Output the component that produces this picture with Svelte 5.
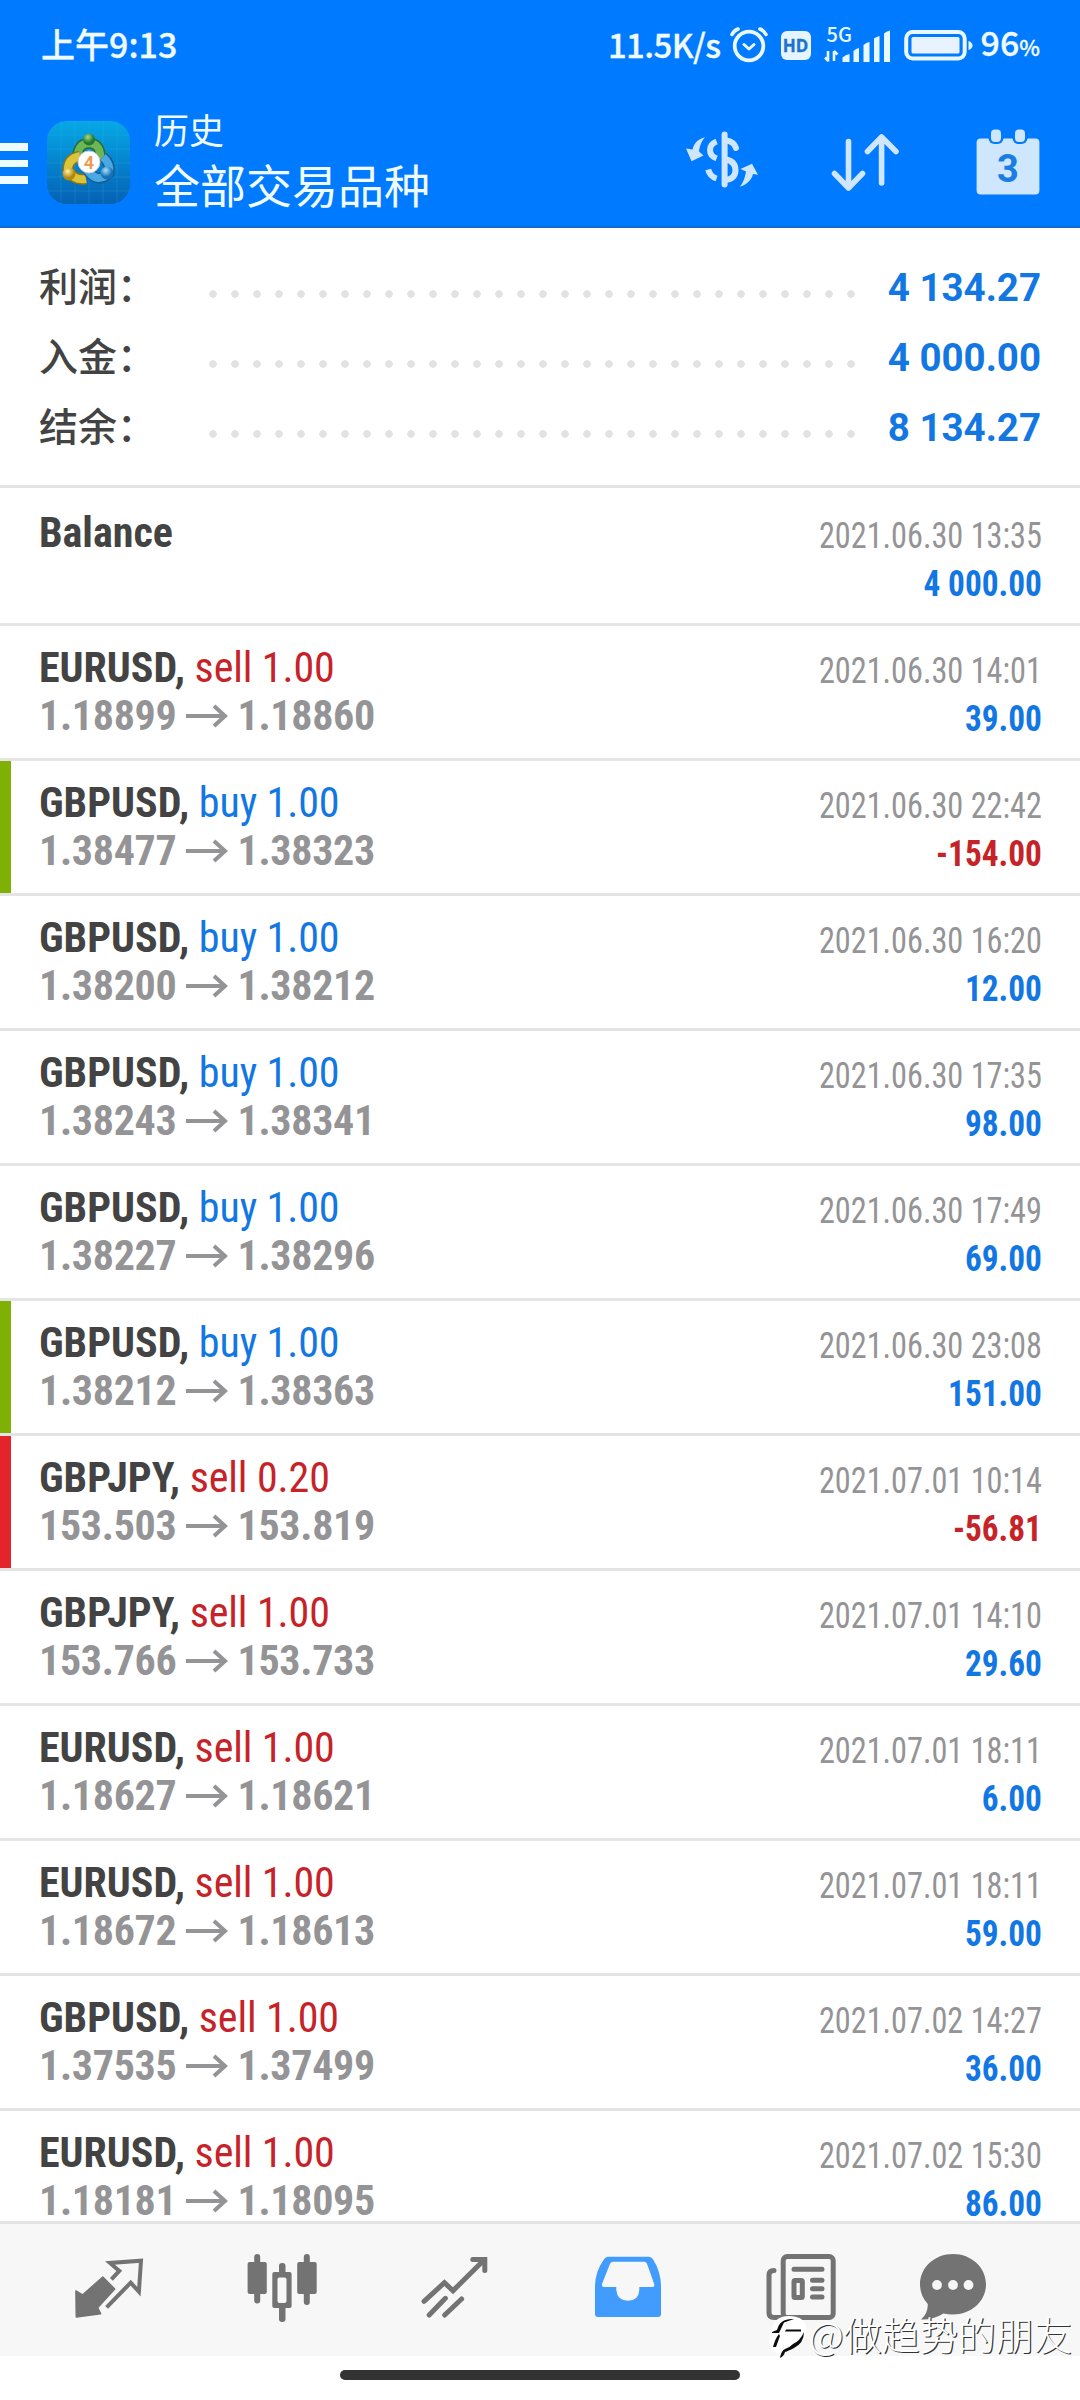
<script lang="ts">
	type Deal = {
		symbol: string;
		side?: 'buy' | 'sell';
		volume?: string;
		open?: string;
		close?: string;
		time: string;
		profit: string;
		mark?: 'tp' | 'sl';
	};

	const summary = [
		{ label: '利润：', value: '4 134.27' },
		{ label: '入金：', value: '4 000.00' },
		{ label: '结余：', value: '8 134.27' }
	];

	const deals: Deal[] = [
		{ symbol: 'Balance', time: '2021.06.30 13:35', profit: '4 000.00' },
		{ symbol: 'EURUSD', side: 'sell', volume: '1.00', open: '1.18899', close: '1.18860', time: '2021.06.30 14:01', profit: '39.00' },
		{ symbol: 'GBPUSD', side: 'buy', volume: '1.00', open: '1.38477', close: '1.38323', time: '2021.06.30 22:42', profit: '-154.00', mark: 'tp' },
		{ symbol: 'GBPUSD', side: 'buy', volume: '1.00', open: '1.38200', close: '1.38212', time: '2021.06.30 16:20', profit: '12.00' },
		{ symbol: 'GBPUSD', side: 'buy', volume: '1.00', open: '1.38243', close: '1.38341', time: '2021.06.30 17:35', profit: '98.00' },
		{ symbol: 'GBPUSD', side: 'buy', volume: '1.00', open: '1.38227', close: '1.38296', time: '2021.06.30 17:49', profit: '69.00' },
		{ symbol: 'GBPUSD', side: 'buy', volume: '1.00', open: '1.38212', close: '1.38363', time: '2021.06.30 23:08', profit: '151.00', mark: 'tp' },
		{ symbol: 'GBPJPY', side: 'sell', volume: '0.20', open: '153.503', close: '153.819', time: '2021.07.01 10:14', profit: '-56.81', mark: 'sl' },
		{ symbol: 'GBPJPY', side: 'sell', volume: '1.00', open: '153.766', close: '153.733', time: '2021.07.01 14:10', profit: '29.60' },
		{ symbol: 'EURUSD', side: 'sell', volume: '1.00', open: '1.18627', close: '1.18621', time: '2021.07.01 18:11', profit: '6.00' },
		{ symbol: 'EURUSD', side: 'sell', volume: '1.00', open: '1.18672', close: '1.18613', time: '2021.07.01 18:11', profit: '59.00' },
		{ symbol: 'GBPUSD', side: 'sell', volume: '1.00', open: '1.37535', close: '1.37499', time: '2021.07.02 14:27', profit: '36.00' },
		{ symbol: 'EURUSD', side: 'sell', volume: '1.00', open: '1.18181', close: '1.18095', time: '2021.07.02 15:30', profit: '86.00' }
	];
</script>

<div class="screen">
	<header>
		<div class="status-bar">
			<span class="clock">上午9:13</span>
			<div class="status-right">
				<span class="speed">11.5K/s</span>
				<svg class="alarm" viewBox="0 0 40 38" width="40" height="38" fill="none" stroke="#e9f8ff" stroke-linecap="round">
					<circle cx="20" cy="20" r="14.3" stroke-width="3.8" />
					<path d="M15 18.5l5 4.5 5-4.5" stroke-width="3" stroke-linejoin="round" />
					<path d="M3 8.5Q5 4.5 9 3M37 8.5Q35 4.5 31 3" stroke-width="3.6" />
				</svg>
				<span class="hd">HD</span>
				<svg class="signal" viewBox="0 0 68 38" width="68" height="38" fill="#e9f8ff">
					<text x="2.5" y="16" font-size="20" font-family="Noto Sans CJK SC, sans-serif">5G</text>
					<path d="M4 25v10.5M1 31.5l3.5 3.5M10 35V25M10 25l3.5 3.5" fill="none" stroke="#e9f8ff" stroke-width="2.6" />
					<path d="M18.5 31.5q3-3 7-3.5v8h-7zM29.5 25q2.5-2.500 5.500-3v14h-5.500zM39.500 19q2.500-2.500 6-3v20h-6zM50 12.500q2.500-2 5.500-2.500v26H50zM60 7.500q3-2.500 6-3V36h-6z" />
				</svg>
				<svg class="battery" viewBox="0 0 70 32" width="70" height="32">
					<rect x="2.2" y="3" width="58.5" height="26.5" rx="6.5" fill="none" stroke="#e9f8ff" stroke-width="4" />
					<rect x="7.5" y="8" width="48" height="16.5" rx="1.5" fill="#e9f2ff" />
					<path d="M64.5 12q4 1.5 4 4.5t-4 4.5z" fill="#e9f8ff" />
				</svg>
				<span class="percent">96<small>%</small></span>
			</div>
		</div>
		<div class="toolbar">
			<div class="burger"><i></i><i></i><i></i></div>
			<svg class="logo" viewBox="0 0 83 83" width="83" height="83">
				<defs>
					<linearGradient id="tile" x1="0" y1="0" x2="0" y2="1">
						<stop offset="0" stop-color="#06a8e6" />
						<stop offset="1" stop-color="#0560b4" />
					</linearGradient>
					<radialGradient id="green" cx=".4" cy=".3"><stop offset="0" stop-color="#a9d88a" /><stop offset="1" stop-color="#1f7a2c" /></radialGradient>
					<radialGradient id="yellow" cx=".4" cy=".3"><stop offset="0" stop-color="#fff3a0" /><stop offset="1" stop-color="#b38a10" /></radialGradient>
					<radialGradient id="blue" cx=".4" cy=".3"><stop offset="0" stop-color="#a9e0fa" /><stop offset="1" stop-color="#1670b8" /></radialGradient>
				</defs>
				<rect width="83" height="83" rx="20" fill="url(#tile)" />
				<path d="M14 0v83M28 0v83M42 0v83M56 0v83M70 0v83M0 14h83M0 28h83M0 42h83M0 56h83M0 70h83" stroke="#3ec0e8" stroke-opacity=".2" />
				<path d="M31 40q-2-17 11-18q13 1 11 18" fill="none" stroke="#236c35" stroke-width="11" />
				<path d="M31 40q-2-17 11-18q13 1 11 18" fill="none" stroke="#6cb656" stroke-width="8" />
				<path d="M33 35q-13 3-12 15q7 10 18 8" fill="none" stroke="#8c7414" stroke-width="11" />
				<path d="M33 35q-13 3-12 15q7 10 18 8" fill="none" stroke="#d9c43a" stroke-width="8" />
				<path d="M56 36q8 7 6 16q-11 11-21-2" fill="none" stroke="#155c94" stroke-width="11" />
				<path d="M56 36q8 7 6 16q-11 11-21-2" fill="none" stroke="#4aa9e2" stroke-width="8" />
				<circle cx="42" cy="18.5" r="6" fill="url(#green)" />
				<circle cx="22" cy="53" r="6.5" fill="url(#yellow)" />
				<circle cx="60" cy="52" r="6.5" fill="url(#blue)" />
				<circle cx="42" cy="41" r="11" fill="#fff" stroke="#c9c9c9" />
				<text x="42" y="47.5" text-anchor="middle" font-size="18" font-weight="700" font-family="Roboto, sans-serif" fill="#ee9c55">4</text>
			</svg>
			<div class="titles">
				<div class="title">历史</div>
				<div class="subtitle">全部交易品种</div>
			</div>
			<div class="actions">
				<svg viewBox="0 0 76 62" width="76" height="62" fill="#cfe6ff">
					<path d="M21.3 8.3C14 10 10 14 8.5 20.5L2 19.5 7.5 32.3 19.5 26.5 15 22.5C16 16 18 11 21.3 8.3zM56 57.7C63 55.5 67.5 51 69 45L74 45.7 68 34.7 56.4 40 62 42.5C61 49 59 53.5 56 57.7z" />
					<path d="M32.6 12.5Q26 15 26 21t6.6 8.5M32.6 49.5Q26 47.5 24.2 40.5" fill="none" stroke="#cfe6ff" stroke-width="6" />
					<path d="M40.6 5.5v50" stroke="#cfe6ff" stroke-width="6" stroke-linecap="round" />
					<path d="M42 11.5q8 1 10 7.5M42 30.5q9.5 2 9.5 10.5T42 51" fill="none" stroke="#cfe6ff" stroke-width="6" stroke-linecap="round" />
				</svg>
				<svg class="sort" viewBox="0 0 70 62" width="70" height="62" fill="none" stroke="#cfe6ff" stroke-width="5.6" stroke-linecap="round" stroke-linejoin="round">
					<path d="M18.5 10.5V57M4.5 42.5l14 14.5 14-14.5M51.6 52V6M37.5 20.5L51.6 6 66 20.5" />
				</svg>
				<svg viewBox="0 0 64 66" width="64" height="66">
					<rect x=".6" y="9.5" width="62.8" height="56" rx="4" fill="#cfe6ff" />
					<rect x="12.5" y="-3" width="15" height="18" rx="6" fill="#007aff" />
					<rect x="36.5" y="-3" width="15" height="18" rx="6" fill="#007aff" />
					<rect x="15" y=".5" width="10" height="12.5" rx="4" fill="#cfe6ff" />
					<rect x="39" y=".5" width="10" height="12.5" rx="4" fill="#cfe6ff" />
					<text x="32" y="52.5" text-anchor="middle" font-size="38" font-weight="700" font-family="Roboto, sans-serif" fill="#1a7de0">3</text>
				</svg>
			</div>
		</div>
	</header>

	<section class="summary">
		{#each summary as line}
			<div class="summary-line">
				<span class="summary-label">{line.label}</span>
				<span class="dots"></span>
				<span class="summary-value">{line.value}</span>
			</div>
		{/each}
	</section>

	<main>
		{#each deals as deal}
			<div class="deal {deal.mark ?? ''}">
				<div class="left">
					<div class="name">
						<b>{deal.symbol}{deal.side ? ',' : ''}</b>
						{#if deal.side}<span class={deal.side}>{deal.side} {deal.volume}</span>{/if}
					</div>
					{#if deal.open}
						<div class="prices">
							<span>{deal.open}</span>
							<svg viewBox="0 0 42 24" width="42" height="24" fill="none" stroke="#949496" stroke-width="4">
								<path d="M0 12h39M28 2l11 10-11 10" />
							</svg>
							<span>{deal.close}</span>
						</div>
					{/if}
				</div>
				<div class="right">
					<div class="time">{deal.time}</div>
					<div class="profit" class:loss={deal.profit.startsWith('-')}>{deal.profit}</div>
				</div>
			</div>
		{/each}
	</main>

	<nav>
		<svg viewBox="0 0 72 72">
			<path d="M3.3 65L2.9 39 9.5 43 29.8 25 41.7 37 24.6 55.7 27.7 61.8z" fill="#737373" stroke="#737373" stroke-width="1.5" stroke-linejoin="round" />
			<path d="M38.4 27.3l7.9-8.3-9.3-8 31-2.3-2.1 31-8.2-9-24.1 24.6" fill="none" stroke="#737373" stroke-width="4" />
		</svg>
		<svg viewBox="0 0 72 72" fill="#737373">
			<rect x="8.2" y="2" width="6" height="49.5" rx="3" />
			<rect x="1.6" y="10" width="19.2" height="32" rx="2" />
			<rect x="33" y="11" width="6.5" height="59" rx="3" />
			<rect x="26.3" y="20" width="19.3" height="36" rx="2" />
			<rect x="31.5" y="25.5" width="9" height="25.5" rx="2" fill="#f7f7f7" />
			<rect x="57.8" y="2" width="6" height="51" rx="3" />
			<rect x="51.2" y="10" width="19.5" height="32" rx="2" />
		</svg>
		<svg viewBox="0 0 72 72" fill="none" stroke="#737373" stroke-width="5" stroke-linecap="round">
			<path d="M5 49.3l20.4-18.6 8.6 8L65 8M53.8 7.5h12v11M10.2 63l16.2-16.7M25.7 63l16.9-16" />
		</svg>
		<svg viewBox="0 0 72 72">
			<path fill="#429cfd" fill-rule="evenodd" d="M16 4.7h41q2.5 0 4 2.5Q69 20 69 34v28q0 3-3 3H6q-3 0-3-3V34Q3 20 12 7.2q1.5-2.5 4-2.5zM21 9.7q-2 0-3 2L10 32q-.6 3 2 3h12.3v3q1 10.700 11.700 10.700T47.300 38v-3H60q3 0 2.200-3L55 11.700q-.8-2-3-2z" />
		</svg>
		<svg viewBox="0 0 72 72" fill="none" stroke="#737373" stroke-width="5" stroke-linecap="round">
			<rect x="18.2" y="4.5" width="50" height="61" rx="4" />
			<path d="M9 18.5Q4 18.5 4 23v38q0 4.5 5 4.5h12M29 17.3h28M47.5 28.3h9.5M47.5 36.7h9.5M47.5 45h9.5" />
			<rect x="29" y="28.5" width="8.3" height="17" rx="1" />
		</svg>
		<svg viewBox="0 0 72 72">
			<path fill="#737373" d="M36 2c18.5 0 33 13.5 33 30.3S54.5 62.5 36 62.5q-5 0-9.5-1Q16 68 4 67.5 11 61.5 10.8 52 3 43.5 3 32.3C3 15.5 17.5 2 36 2z" />
			<circle cx="20" cy="33" r="4.9" fill="#f7f7f7" />
			<circle cx="36" cy="33" r="4.9" fill="#f7f7f7" />
			<circle cx="51.5" cy="33" r="4.9" fill="#f7f7f7" />
		</svg>
	</nav>

	<footer><div class="home-bar"></div></footer>

	<div class="watermark">
		<svg viewBox="0 0 40 48" width="40" height="48">
			<path d="M4 19Q6 3 22 3q17 0 17 14 0 15-22 21-1 3-3 6-3-5-8-5-6-10-2-20z" fill="#fff" />
			<path d="M5 19l5-2Q13 5 27 6L17 9.500 12 20H5zM19 16.500h15v2H18zM6 34q2-8 6-13l1 2-4 11zM37 19q0 11-10 16-6 3-9 4-1 4-5 6 1-7 5-9 4-1 8-5 7-3 11-12z" fill="#0c0c0c" />
		</svg>
		<span>@做趋势的朋友</span>
	</div>
</div>

<style>
	:global(body) {
		background: #fff;
	}
	.screen {
		position: relative;
		width: 1080px;
		height: 2400px;
		overflow: hidden;
		display: flex;
		flex-direction: column;
		background: #fff;
		color: #434343;
		font-family: Roboto, 'Noto Sans CJK SC', sans-serif;
	}
	header {
		box-sizing: border-box;
		height: 228px;
		flex: none;
		background: #007aff;
		border-bottom: 2px solid #126bd0;
		color: #f0fbff;
	}
	.status-bar {
		display: flex;
		justify-content: space-between;
		align-items: center;
		height: 90px;
		padding: 0 40px 0 41px;
		font-family: 'Noto Sans CJK SC', sans-serif;
		font-size: 34px;
		font-weight: 500;
		white-space: nowrap;
		-webkit-text-stroke: 0.3px currentColor;
	}
	.clock,
	.speed,
	.percent {
		line-height: 48px;
		padding-bottom: 2px;
	}
	.status-right {
		display: flex;
		align-items: center;
	}
	.speed {
		margin-right: 8px;
		font-size: 33px;
		letter-spacing: -0.6px;
	}
	.alarm {
		margin-right: 12px;
	}
	.hd {
		width: 30px;
		height: 29px;
		margin-right: 13px;
		border-radius: 6px;
		background: #e6f4ff;
		color: #1a73d0;
		font: 700 17px/29px 'Open Sans', sans-serif;
		text-align: center;
	}
	.signal {
		margin-right: 12px;
		overflow: visible;
	}
	.signal text {
		stroke: none;
	}
	.battery {
		margin-right: 7px;
	}
	.percent small {
		font-size: 22px;
	}
	.toolbar {
		display: flex;
		align-items: flex-start;
		height: 136px;
	}
	.burger {
		display: flex;
		flex-direction: column;
		gap: 9px;
		width: 28px;
		margin: 53px 19px 0 0;
	}
	.burger i {
		height: 7.5px;
		background: #effcff;
	}
	.logo {
		margin-top: 31px;
	}
	.titles {
		margin: 14px 0 0 24px;
		font-family: 'Noto Sans CJK SC', sans-serif;
		white-space: nowrap;
	}
	.title {
		font-size: 35px;
		line-height: 50px;
	}
	.subtitle {
		font-size: 46px;
		line-height: 58px;
	}
	.actions {
		display: flex;
		gap: 70px;
		margin: 39px 40px 0 auto;
	}
	.sort {
		margin: 2px 6px 0 0;
	}
	.summary {
		box-sizing: border-box;
		height: 260px;
		flex: none;
		padding: 24px 39px 0;
		border-bottom: 3px solid #e4e4e4;
	}
	.summary-line {
		display: flex;
		align-items: center;
		height: 70px;
	}
	.summary-label {
		width: 163px;
		padding-bottom: 6px;
		font-size: 39px;
		font-weight: 500;
		white-space: nowrap;
	}
	.dots {
		width: 660px;
		height: 8px;
		margin-top: 14px;
		background: radial-gradient(circle at 11px 4px, #e2e2e2 3.5px, transparent 4px) 0 0 / 22px 8px;
	}
	.summary-value {
		margin-left: auto;
		color: #1277e3;
		font-size: 38.5px;
		font-weight: 700;
	}
	main {
		height: 1733px;
		flex: none;
		padding-top: 3px;
		box-sizing: border-box;
	}
	.deal {
		box-sizing: border-box;
		display: flex;
		justify-content: space-between;
		height: 135px;
		padding: 18px 38px 0 39px;
		border-bottom: 3px solid #e4e4e4;
		line-height: 48px;
		white-space: nowrap;
		font-stretch: 75%;
	}
	.deal:last-child {
		height: 114px;
		border-bottom: 0;
	}
	.tp {
		box-shadow: inset 11px 0 #7fb104;
	}
	.sl {
		box-shadow: inset 11px 0 #e3242b;
	}
	.name {
		height: 48px;
		font-size: 42px;
	}
	.name span {
		letter-spacing: -0.1px;
	}
	.sell,
	.loss {
		color: #c62329;
	}
	.buy {
		color: #1277e3;
	}
	.prices {
		display: flex;
		align-items: center;
		gap: 9.5px;
		color: #949496;
		font-size: 42px;
		font-weight: 700;
		letter-spacing: -0.3px;
	}
	.right {
		padding-top: 3px;
		text-align: right;
		font-size: 36px;
	}
	/* figures are set narrower than the condensed face */
	.time {
		color: #949496;
		transform: scaleX(0.896);
		transform-origin: right;
	}
	.profit {
		color: #1277e3;
		font-weight: 700;
		transform: scaleX(0.925);
		transform-origin: right;
	}
	.profit.loss {
		color: #c62329;
	}
	nav {
		box-sizing: border-box;
		height: 135px;
		flex: none;
		display: grid;
		grid-template-columns: repeat(5, 173.2px) 131px;
		justify-items: center;
		padding: 28px 0 0 22px;
		border-top: 3px solid #e4e4e4;
		background: #f7f7f7;
	}
	nav svg {
		width: 72px;
		height: 72px;
	}
	footer {
		height: 44px;
		background: #fff;
	}
	.home-bar {
		width: 400px;
		height: 10px;
		margin: 14px auto 0;
		border-radius: 5px;
		background: #333;
	}
	.watermark {
		position: absolute;
		right: 8px;
		bottom: 36px;
		display: flex;
		align-items: center;
		gap: 2px;
		color: #fff;
		font: 300 38.1px/50px 'Noto Sans CJK SC', sans-serif;
		text-shadow: 1.2px 1.2px 0 #333;
		white-space: nowrap;
	}
	.watermark span {
		padding-bottom: 5px;
	}
</style>
